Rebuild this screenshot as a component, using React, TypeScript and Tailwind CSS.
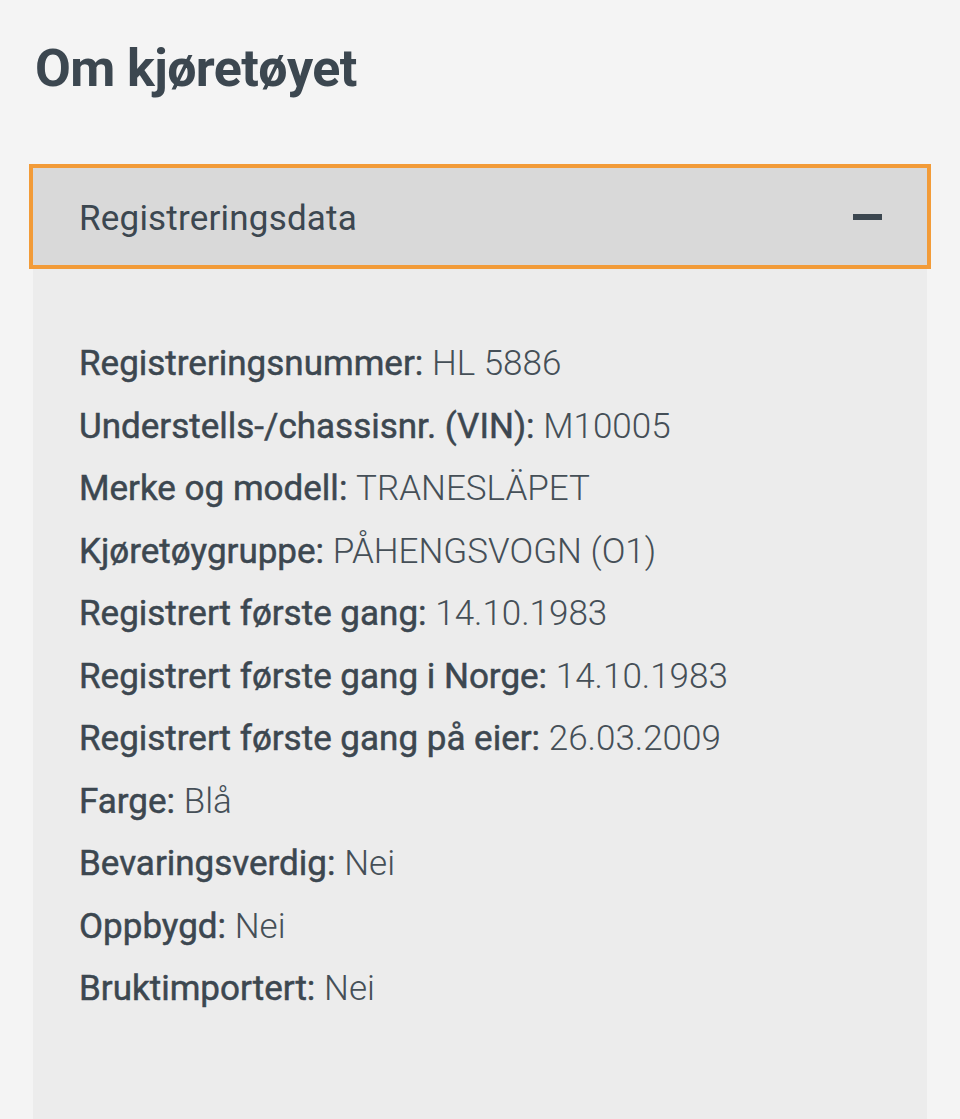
import React from "react";

const rows: [string, string][] = [
  ["Registreringsnummer:", "HL 5886"],
  ["Understells-/chassisnr. (VIN):", "M10005"],
  ["Merke og modell:", "TRANESLÄPET"],
  ["Kjøretøygruppe:", "PÅHENGSVOGN (O1)"],
  ["Registrert første gang:", "14.10.1983"],
  ["Registrert første gang i Norge:", "14.10.1983"],
  ["Registrert første gang på eier:", "26.03.2009"],
  ["Farge:", "Blå"],
  ["Bevaringsverdig:", "Nei"],
  ["Oppbygd:", "Nei"],
  ["Bruktimportert:", "Nei"],
];

export default function App() {
  return (
    <div
      className="min-h-[1119px] w-[960px] overflow-hidden bg-[#f4f4f4] text-[#3c4750]"
      style={{ fontFamily: "Roboto, 'Noto Sans', sans-serif" }}
    >
      <h1 className="pl-[35px] pt-[39px] text-[52px] font-bold leading-[60px] tracking-[-0.6px]">
        Om kjøretøyet
      </h1>
      <div className="mx-[33px] mt-[69px] bg-[#ececec] pb-[120px]">
        <div className="flex h-[97px] items-center justify-between bg-[#d9d9d9] pl-[46px] pr-[45px] outline-[4px] outline-solid outline-[#f29b38]">
          <span className="pt-[3px] text-[35px] leading-none tracking-[0.2px]">Registreringsdata</span>
          <span className="block h-[6px] w-[29px] bg-[#3c4750]" />
        </div>
        <div className="pl-[46px] pt-[68px]">
          {rows.map(([k, v]) => (
            <div key={k} className="text-[35px] leading-[62.5px] whitespace-nowrap">
              <span className="font-normal [-webkit-text-stroke:0.5px_#3c4750]">{k}</span>{" "}
              <span className="font-light text-[#454f57]">{v}</span>
            </div>
          ))}
        </div>
      </div>
    </div>
  );
}
